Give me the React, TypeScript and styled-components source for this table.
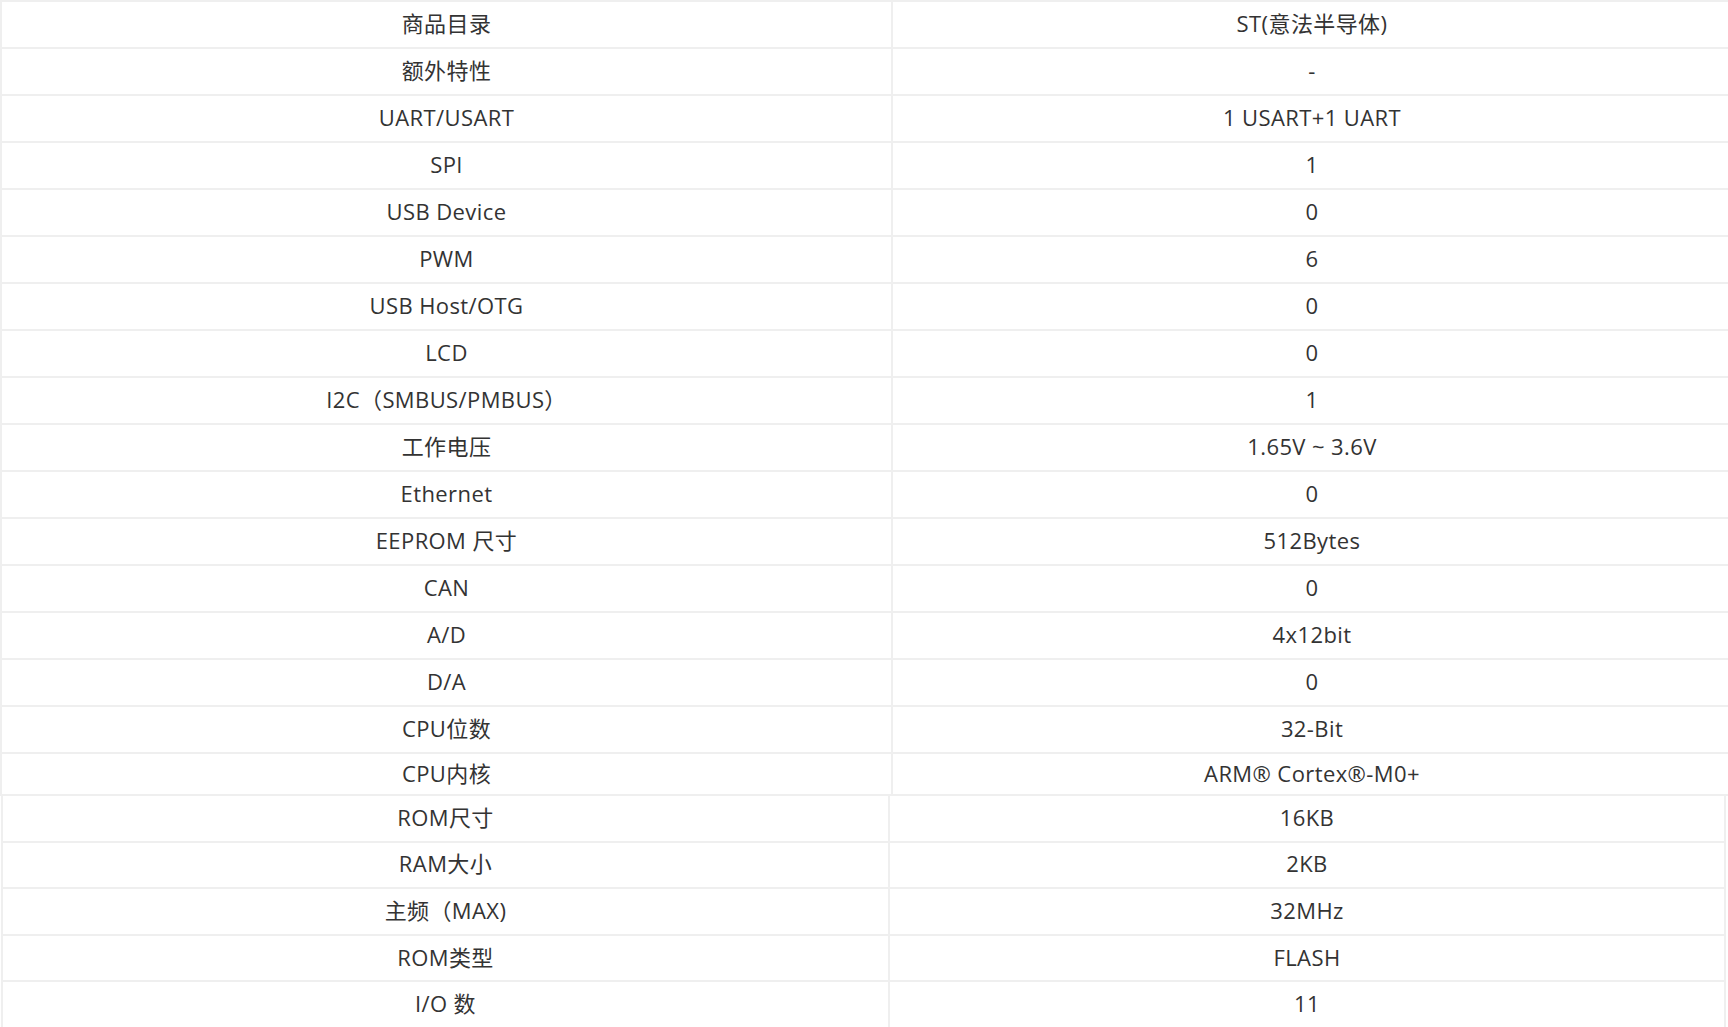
import { createGlobalStyle, styled } from "styled-components";

type Spec = { label: string; value: string };

const mainSpecs: Spec[] = [
  { label: "商品目录", value: "ST(意法半导体)" },
  { label: "额外特性", value: "-" },
  { label: "UART/USART", value: "1 USART+1 UART" },
  { label: "SPI", value: "1" },
  { label: "USB Device", value: "0" },
  { label: "PWM", value: "6" },
  { label: "USB Host/OTG", value: "0" },
  { label: "LCD", value: "0" },
  { label: "I2C（SMBUS/PMBUS）", value: "1" },
  { label: "工作电压", value: "1.65V ~ 3.6V" },
  { label: "Ethernet", value: "0" },
  { label: "EEPROM 尺寸", value: "512Bytes" },
  { label: "CAN", value: "0" },
  { label: "A/D", value: "4x12bit" },
  { label: "D/A", value: "0" },
  { label: "CPU位数", value: "32-Bit" },
  { label: "CPU内核", value: "ARM® Cortex®-M0+" },
];

const memorySpecs: Spec[] = [
  { label: "ROM尺寸", value: "16KB" },
  { label: "RAM大小", value: "2KB" },
  { label: "主频（MAX)", value: "32MHz" },
  { label: "ROM类型", value: "FLASH" },
  { label: "I/O 数", value: "11" },
];

const GlobalStyle = createGlobalStyle`
  html, body {
    margin: 0;
    padding: 0;
    background: #ffffff;
    overflow: hidden;
  }
  body {
    font-family: "Open Sans", "Noto Sans CJK SC", sans-serif;
    color: #333333;
  }
`;

const Page = styled.div`
  width: 1728px;
  height: 1027px;
  overflow: hidden;
`;

const SpecGrid = styled.div<{
  $first: number;
  $second: number;
  $rows: string;
  $offset: number;
  $top: boolean;
}>`
  display: grid;
  grid-template-columns: ${(p) => p.$first}px ${(p) => p.$second}px;
  grid-template-rows: ${(p) => p.$rows};
  margin-left: ${(p) => p.$offset}px;
  width: max-content;
  border-left: 2px solid #efefef;
  border-top: ${(p) => (p.$top ? "2px solid #efefef" : "none")};
`;

const Cell = styled.div`
  display: flex;
  align-items: center;
  justify-content: center;
  padding-bottom: 3px;
  border-right: 2px solid #efefef;
  border-bottom: 2px solid #efefef;
  font-size: 22px;
  letter-spacing: 0.4px;
  line-height: 1;
  white-space: nowrap;
`;

const SpecTable = ({
  rows,
  first,
  second,
  row,
  last,
  offset = 0,
  top = false,
}: {
  rows: Spec[];
  first: number;
  second: number;
  row: number;
  last?: number;
  offset?: number;
  top?: boolean;
}) => {
  // the last row of the first table is cut short where the second table begins
  const template = last
    ? `repeat(${rows.length - 1}, ${row}px) ${last}px`
    : `repeat(${rows.length}, ${row}px)`;

  return (
    <SpecGrid $first={first} $second={second} $rows={template} $offset={offset} $top={top}>
      {rows.map((r) => [
        <Cell key={r.label + "-l"}>{r.label}</Cell>,
        <Cell key={r.label + "-v"}>{r.value}</Cell>,
      ])}
    </SpecGrid>
  );
};

export default function App() {
  return (
    <>
      <GlobalStyle />
      <Page>
        <SpecTable rows={mainSpecs} first={891} second={840} row={47} last={42} top />
        <SpecTable rows={memorySpecs} first={887} second={836} row={46.6} offset={1} />
      </Page>
    </>
  );
}
